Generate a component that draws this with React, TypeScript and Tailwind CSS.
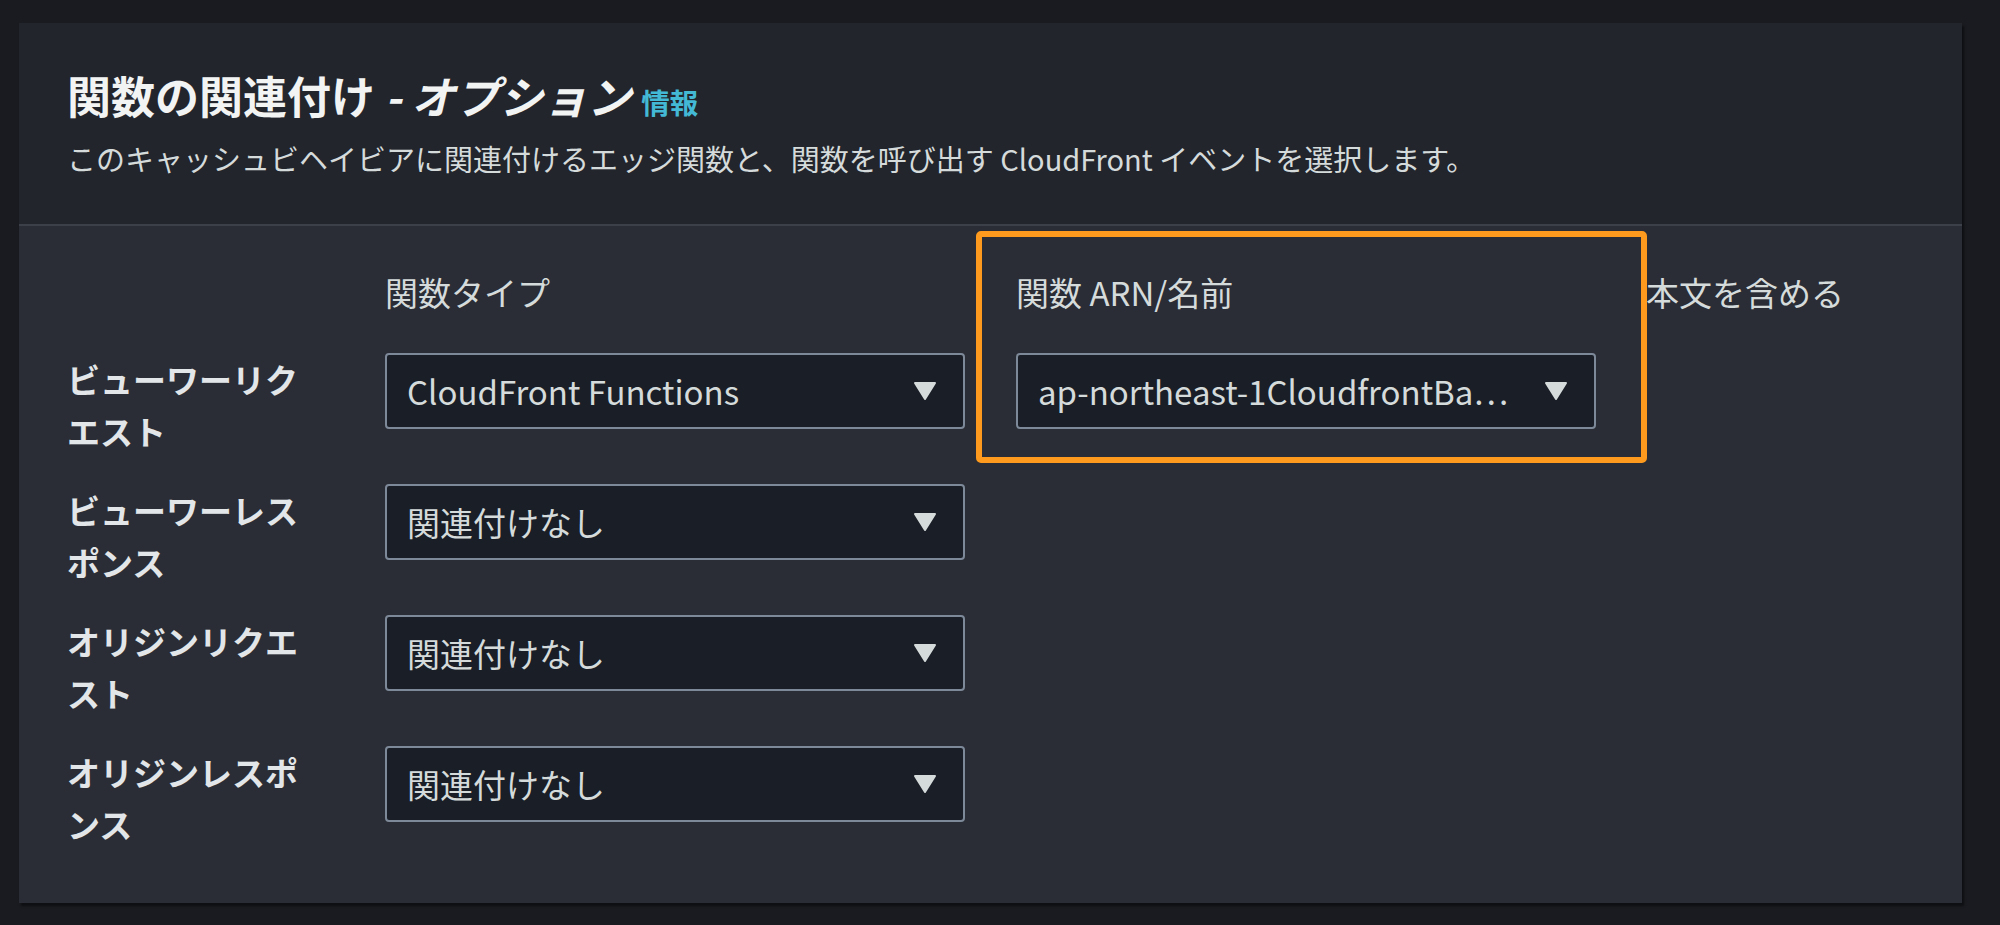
const rows = [
  { label: ["ビューワーリク", "エスト"], type: "CloudFront Functions", arn: "ap-northeast-1CloudfrontBa…" },
  { label: ["ビューワーレス", "ポンス"], type: "関連付けなし" },
  { label: ["オリジンリクエ", "スト"], type: "関連付けなし" },
  { label: ["オリジンレスポ", "ンス"], type: "関連付けなし" },
];

function Caret() {
  return (
    <svg width="24" height="20" viewBox="0 0 24 20" className="shrink-0">
      <polygon points="2,2 22,2 12,18" fill="#d5dbdb" stroke="#d5dbdb" strokeWidth="2" strokeLinejoin="round" />
    </svg>
  );
}

function Select({ value }: { value: string }) {
  return (
    <div className="flex h-[76px] w-[580px] items-center justify-between gap-[16px] rounded-[4px] border-2 border-[#7d8998] bg-[#1a1f27] pl-[20px] pr-[26px]">
      <span className="truncate text-[33px] leading-[48px] text-[#d5dbdb]">{value}</span>
      <Caret />
    </div>
  );
}

export default function App() {
  return (
    <div className="h-[925px] w-[2000px] bg-[#1a1b20] pl-[19px] pt-[23px] font-['Noto_Sans_CJK_JP',sans-serif]">
      <section className="flex h-[880px] w-[1943px] flex-col bg-[#2a2d35] shadow-[2px_3px_2px_#0e0f12]">
        {/* Header */}
        <div className="h-[203px] border-b-2 border-[#3b4049] bg-[#22252c] pl-[48px] pt-[46px]">
          <h2 className="text-[44px] font-bold leading-[52px] text-[#f2f3f3]">
            関数の関連付け <i>- オプション</i>
            <a className="ml-[10px] text-[28.5px] font-bold text-[#44b9d6]">情報</a>
          </h2>
          <p className="mt-[12px] text-[29px] leading-[37px] text-[#d5dbdb]">
            このキャッシュビヘイビアに関連付けるエッジ関数と、関数を呼び出す CloudFront イベントを選択します。
          </p>
        </div>

        {/* Associations */}
        <div className="relative pl-[48px] pt-[40px]">
          <div className="grid grid-cols-[267px_580px_580px_1fr] gap-x-[51px] text-[33px] leading-[52px]">
            <div />
            <div className="text-[#d5dbdb]">関数タイプ</div>
            <div className="text-[#d5dbdb]">関数 ARN/名前</div>
            <div className="-ml-[1px] text-[#d5dbdb]">本文を含める</div>
          </div>

          <div className="mt-[35px] flex flex-col gap-[27px]">
            {rows.map((r) => (
              <div key={r.label.join("")} className="grid h-[104px] grid-cols-[267px_580px_580px_1fr] gap-x-[51px]">
                <div className="text-[33px] font-bold leading-[52px] text-[#e3e6e8]">
                  {r.label[0]}
                  <br />
                  {r.label[1]}
                </div>
                <Select value={r.type} />
                {r.arn ? <Select value={r.arn} /> : <div />}
                <div />
              </div>
            ))}
          </div>

          {/* highlight */}
          <div className="pointer-events-none absolute left-[957px] top-[5px] h-[232px] w-[671px] rounded-[5px] border-[6px] border-[#fe9a1d]" />
        </div>
      </section>
    </div>
  );
}
